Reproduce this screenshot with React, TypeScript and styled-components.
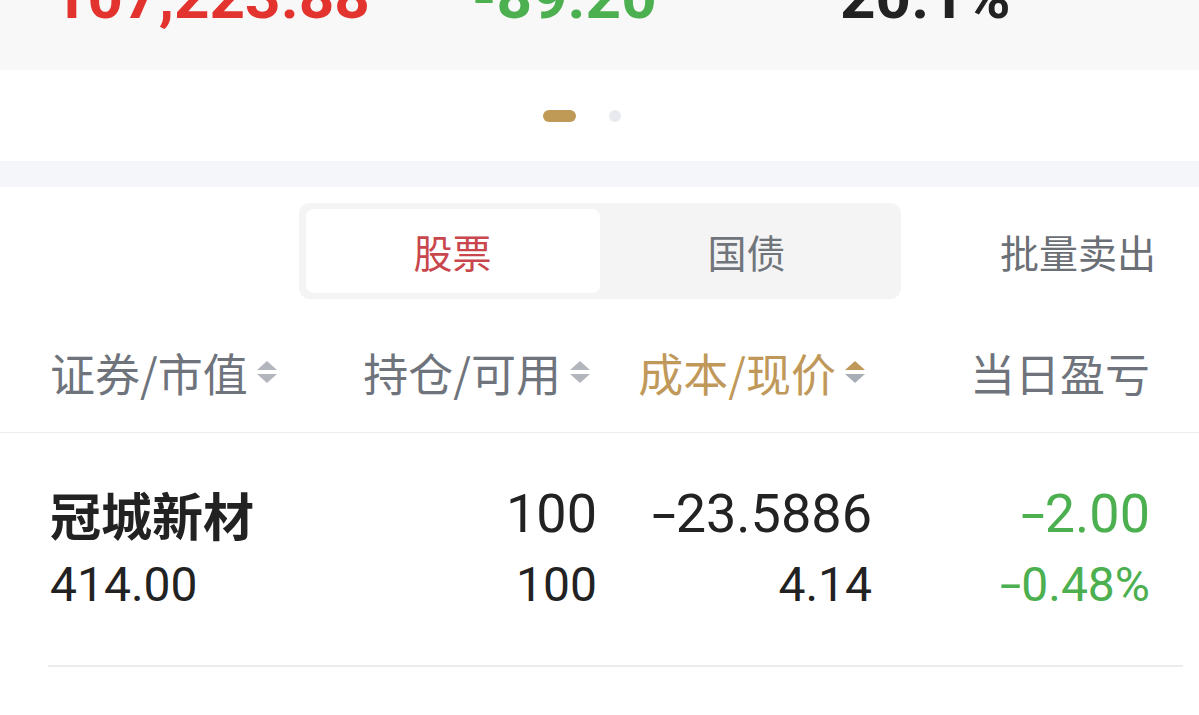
import styled, { createGlobalStyle } from "styled-components";

const GlobalStyle = createGlobalStyle`
  html, body {
    margin: 0;
    padding: 0;
    background: #ffffff;
  }
  body {
    font-family: Roboto, "Noto Sans CJK SC", sans-serif;
    -webkit-font-smoothing: antialiased;
  }
`;

const colors = {
  red: "#e2332e",
  green: "#4caf50",
  ink: "#222222",
  muted: "#6f747c",
  gold: "#c0995a",
  line: "#ececec",
};

type Tone = "red" | "green" | "ink";

const toneColor = (tone: Tone) => colors[tone];

const Page = styled.div`
  width: 1199px;
  background: #ffffff;
`;

/* summary numbers, scrolled partly out of view */
const SummaryBand = styled.section`
  height: 70px;
  overflow: hidden;
  background: #f8f8f8;
`;

const SummaryGrid = styled.div`
  display: grid;
  grid-template-columns: 420px 368px 1fr;
  padding-left: 52px;
  margin-top: -35px;
`;

const BigNumber = styled.div<{ $tone: Tone }>`
  font-family: Roboto, sans-serif;
  font-weight: 700;
  font-size: 62px;
  line-height: 64px;
  color: ${(p) => toneColor(p.$tone)};
`;

const Pager = styled.div`
  height: 91px;
  display: flex;
  align-items: center;
  justify-content: center;
  gap: 33px;
  padding-right: 36px;
`;

const Dot = styled.span<{ $active?: boolean }>`
  display: block;
  width: ${(p) => (p.$active ? "33px" : "12px")};
  height: 12px;
  border-radius: 6px;
  background: ${(p) => (p.$active ? "#bf9a57" : "#e8eaf0")};
`;

const Spacer = styled.div`
  height: 26px;
  background: #f5f6fa;
`;

/* tabs */
const TabBar = styled.div`
  display: grid;
  grid-template-columns: 1fr auto 1fr;
  align-items: center;
  padding-top: 16px;
`;

const SegmentGroup = styled.div`
  grid-column: 2;
  display: flex;
  width: 588px;
  padding: 6px 7px;
  background: #f4f4f4;
  border-radius: 11px;
`;

const SegmentTab = styled.div<{ $active?: boolean }>`
  flex: 1;
  height: 84px;
  display: flex;
  align-items: center;
  justify-content: center;
  border-radius: 8px;
  background: ${(p) => (p.$active ? "#ffffff" : "transparent")};
  color: ${(p) => (p.$active ? "#c9474c" : "#70757c")};
  font-family: "Noto Sans CJK SC", sans-serif;
  font-size: 39px;
`;

const BatchSell = styled.div`
  justify-self: end;
  padding-right: 43px;
  color: #6b6f76;
  font-family: "Noto Sans CJK SC", sans-serif;
  font-size: 39px;
`;

/* table */
const columns = "280px 267px 275px 278px";

const HeadRow = styled.div`
  display: grid;
  grid-template-columns: ${columns};
  padding: 51px 0 38px 50px;
  border-bottom: 1px solid ${colors.line};
`;

const HeadCell = styled.div<{ $align: "left" | "right"; $active?: boolean }>`
  display: flex;
  align-items: center;
  justify-content: ${(p) => (p.$align === "left" ? "flex-start" : "flex-end")};
  height: 44px;
  font-family: "Noto Sans CJK SC", sans-serif;
  font-size: 45px;
  color: ${(p) => (p.$active ? colors.gold : colors.muted)};
  white-space: nowrap;
`;

const SortMark = styled.svg`
  flex: none;
  margin: 0 6px 0 8px;
`;

const SortIcon = ({ active }: { active?: boolean }) => (
  <SortMark width="22" height="26" viewBox="0 0 22 26">
    <path d="M11 2 L21 11 H1 Z" fill={active ? "#c0995a" : "#b3b6bc"} />
    <path d="M1 15 H21 L11 24 Z" fill={active ? "#a9adb6" : "#b3b6bc"} />
  </SortMark>
);

const DataRow = styled.div`
  display: grid;
  grid-template-columns: ${columns};
  margin: 0 16px 0 48px;
  padding: 50px 0 49px 2px;
  border-bottom: 2px solid ${colors.line};
`;

const Cell = styled.div<{ $align: "left" | "right" }>`
  display: flex;
  flex-direction: column;
  gap: 9px;
  align-items: ${(p) => (p.$align === "left" ? "flex-start" : "flex-end")};
`;

const Primary = styled.div<{ $tone: Tone }>`
  height: 62px;
  line-height: 62px;
  font-size: 54px;
  color: ${(p) => toneColor(p.$tone)};
  white-space: nowrap;
`;

const StockName = styled(Primary)`
  font-family: "Noto Sans CJK SC", sans-serif;
  font-weight: 700;
  font-size: 51px;
`;

const Secondary = styled.div<{ $tone: Tone }>`
  height: 62px;
  line-height: 62px;
  font-size: 48px;
  color: ${(p) => toneColor(p.$tone)};
  white-space: nowrap;
`;

// the app's minus sign is a bit longer than a hyphen
const Minus = styled.span`
  display: inline-block;
  transform: scaleX(1.6);
  transform-origin: right center;
`;

const signed = (value: string) =>
  value.startsWith("-") ? (
    <>
      <Minus>-</Minus>
      {value.slice(1)}
    </>
  ) : (
    value
  );

export default function App() {
  return (
    <Page>
      <GlobalStyle />
      <SummaryBand>
        <SummaryGrid>
          <BigNumber $tone="red">107,223.88</BigNumber>
          <BigNumber $tone="green">-89.20</BigNumber>
          <BigNumber $tone="ink">20.1%</BigNumber>
        </SummaryGrid>
      </SummaryBand>

      <Pager>
        <Dot $active />
        <Dot />
      </Pager>

      <Spacer />

      <TabBar>
        <SegmentGroup>
          <SegmentTab $active>股票</SegmentTab>
          <SegmentTab>国债</SegmentTab>
        </SegmentGroup>
        <BatchSell>批量卖出</BatchSell>
      </TabBar>

      <HeadRow>
        <HeadCell $align="left">
          证券/市值
          <SortIcon />
        </HeadCell>
        <HeadCell $align="right">
          持仓/可用
          <SortIcon />
        </HeadCell>
        <HeadCell $align="right" $active>
          成本/现价
          <SortIcon active />
        </HeadCell>
        <HeadCell $align="right">当日盈亏</HeadCell>
      </HeadRow>

      <DataRow>
        <Cell $align="left">
          <StockName $tone="ink">冠城新材</StockName>
          <Secondary $tone="ink">414.00</Secondary>
        </Cell>
        <Cell $align="right">
          <Primary $tone="ink">100</Primary>
          <Secondary $tone="ink">100</Secondary>
        </Cell>
        <Cell $align="right">
          <Primary $tone="ink">{signed("-23.5886")}</Primary>
          <Secondary $tone="ink">4.14</Secondary>
        </Cell>
        <Cell $align="right">
          <Primary $tone="green">{signed("-2.00")}</Primary>
          <Secondary $tone="green">{signed("-0.48%")}</Secondary>
        </Cell>
      </DataRow>
    </Page>
  );
}
